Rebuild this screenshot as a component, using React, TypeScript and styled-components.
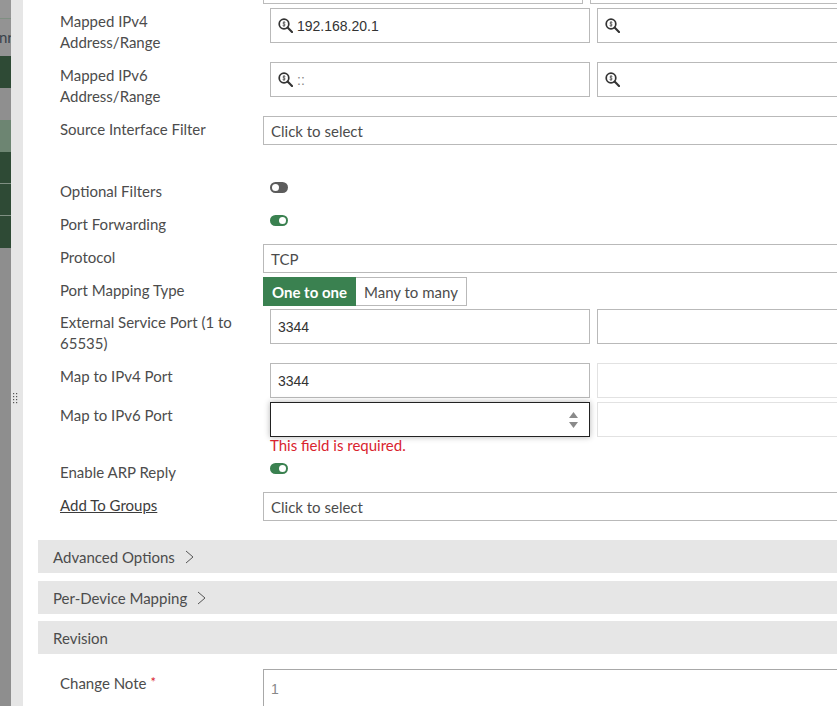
import React from "react";
import styled, { createGlobalStyle } from "styled-components";

const Global = createGlobalStyle`
  html, body { margin: 0; padding: 0; height: 706px; overflow: hidden; background: #fff; }
  #root { height: 706px; }
  * { box-sizing: border-box; }
`;

const Page = styled.div`
  display: flex;
  width: 837px;
  height: 706px;
  overflow: hidden;
  font-family: Lato, "Liberation Sans", sans-serif;
  font-size: 15px;
  color: #4c4c4c;
`;

const Backdrop = styled.div`
  width: 11px;
  flex: none;
  display: flex;
  flex-direction: column;
  background: #8e8e8e;
  overflow: hidden;
`;

const BackdropRow = styled.div<{ $h: number; $bg: string; $line?: boolean }>`
  height: ${(p) => p.$h}px;
  flex: none;
  background: ${(p) => p.$bg};
  border-bottom: ${(p) => (p.$line ? "1px solid #7f8f82" : "none")};
  font-size: 15px;
  line-height: ${(p) => p.$h}px;
  color: #38424b;
  white-space: nowrap;
`;

const ClippedText = styled.span`
  display: block;
  margin-left: -1px;
  line-height: 36px;
`;

const Handle = styled.div`
  width: 12px;
  flex: none;
  background: #e6e6e6;
  padding: 389px 0 0 2px;
`;

const Panel = styled.div`
  flex: 1;
  min-width: 0;
  padding-left: 15px;
  overflow: hidden;
  background: #fff;
`;

const TopStub = styled.div`
  display: grid;
  grid-template-columns: 320px 320px;
  column-gap: 7px;
  height: 4px;
  padding-left: 225px;
`;

const StubCell = styled.div`
  border: 1px solid #bbb;
  border-top: none;
`;

const Row = styled.div<{ $top: number; $wide?: boolean }>`
  display: grid;
  grid-template-columns: ${(p) => (p.$wide ? "203px 700px" : "203px 320px 320px")};
  column-gap: ${(p) => (p.$wide ? "0" : "7px")};
  align-items: start;
  margin-top: ${(p) => p.$top}px;
  padding-left: 22px;
  ${(p) => (p.$wide ? "width: 925px;" : "")}
`;

const Label = styled.div<{ $flush?: boolean }>`
  line-height: 21px;
  padding-top: ${(p) => (p.$flush ? 0 : 3)}px;
  color: #4c4c4c;
`;

const LinkLabel = styled.a`
  color: #3c3c3c;
  text-decoration: underline;
`;

const Required = styled.span`
  color: #d9232e;
  font-size: 13px;
  vertical-align: 2px;
  margin-left: 4px;
`;

const Field = styled.div<{ $tall?: boolean; $tone?: "normal" | "muted" | "focus" }>`
  height: ${(p) => (p.$tall ? 35 : 29)}px;
  display: flex;
  align-items: center;
  gap: 4px;
  padding: 0 7px;
  background: #fff;
  border: ${(p) =>
    p.$tone === "focus"
      ? "1.5px solid #222"
      : p.$tone === "muted"
        ? "1px solid #e2e2e2"
        : "1px solid #b9b9b9"};
  box-shadow: ${(p) => (p.$tone === "focus" ? "0 0 6px rgba(0,0,0,.3)" : "none")};
  color: #4c4c4c;
`;

const Numeric = styled.span<{ $dim?: boolean }>`
  font-family: "Liberation Sans", Arial, sans-serif;
  font-size: 14px;
  color: ${(p) => (p.$dim ? "#888" : "#333")};
`;

const SpinBox = styled.span`
  margin-left: auto;
  margin-right: 4px;
  display: flex;
`;

const ErrorText = styled.div`
  color: #d9232e;
  line-height: 15px;
  margin-top: 1px;
`;

const FieldStack = styled.div`
  display: flex;
  flex-direction: column;
`;

const Toggle = styled.span<{ $on?: boolean }>`
  display: flex;
  align-items: center;
  justify-content: ${(p) => (p.$on ? "flex-end" : "flex-start")};
  width: 18px;
  height: 11px;
  margin-top: 1px;
  padding: 0 2px;
  border-radius: 6px;
  background: ${(p) => (p.$on ? "#3a8150" : "#5c5c5c")};
  &::after {
    content: "";
    width: 7px;
    height: 7px;
    border-radius: 50%;
    background: #fff;
  }
`;

const Segmented = styled.div`
  display: flex;
  height: 29px;
`;

const Segment = styled.div<{ $active?: boolean }>`
  display: flex;
  align-items: center;
  padding: 0 8px;
  background: ${(p) => (p.$active ? "#3a8150" : "#fff")};
  color: ${(p) => (p.$active ? "#fff" : "#4c4c4c")};
  font-weight: ${(p) => (p.$active ? 700 : 400)};
  border: 1px solid ${(p) => (p.$active ? "#3a8150" : "#b9b9b9")};
  border-left: ${(p) => (p.$active ? "1px solid #3a8150" : "none")};
  white-space: nowrap;
`;

const Section = styled.div<{ $top: number }>`
  display: flex;
  align-items: center;
  gap: 10px;
  height: 33px;
  margin-top: ${(p) => p.$top}px;
  padding-left: 15px;
  background: #e6e6e6;
  color: #4c4c4c;
`;

const NoteBox = styled.div`
  height: 60px;
  padding: 9px 7px;
  border: 1px solid #a8a8a8;
  border-bottom: none;
`;

const Dots = () => (
  <svg width="5" height="11" viewBox="0 0 5 11" fill="#555">
    {[0, 3, 6, 9].map((y) => (
      <React.Fragment key={y}>
        <rect x="0" y={y} width="1.2" height="1.2" />
        <rect x="3" y={y} width="1.2" height="1.2" />
      </React.Fragment>
    ))}
  </svg>
);

const MoneySearch = () => (
  <svg width="15" height="15" viewBox="0 0 15 15" fill="none" style={{ flex: "none" }}>
    <circle cx="6" cy="6" r="4.8" stroke="#333" strokeWidth="1.7" />
    <path d="M9.6 9.6 14 14" stroke="#333" strokeWidth="2.1" strokeLinecap="round" />
    <path
      d="M7.4 4.6C7 4 5 3.9 4.9 5c0 1.2 2.4.8 2.3 2 -.1 1.1-2.1 1-2.6.4M6 3.2v5.6"
      stroke="#444"
      strokeWidth=".8"
    />
  </svg>
);

const Spinner = () => (
  <svg width="9" height="16" viewBox="0 0 9 16" fill="#8a8a8a">
    <path d="M4.5 0 9 6H0Z" />
    <path d="M0 10h9l-4.5 6Z" />
  </svg>
);

const Chevron = () => (
  <svg width="9" height="14" viewBox="0 0 9 14" fill="none" style={{ flex: "none" }}>
    <path d="M1 1l7 6-7 6" stroke="#555" strokeWidth="1" />
  </svg>
);

export default function App() {
  return (
    <Page>
      <Global />
      <Backdrop>
        <BackdropRow $h={19} $bg="#969696" $line />
        <BackdropRow $h={37} $bg="#939393">
          <ClippedText>nr</ClippedText>
        </BackdropRow>
        <BackdropRow $h={32} $bg="#2e4a35" />
        <BackdropRow $h={32} $bg="#8f8f8f" />
        <BackdropRow $h={32} $bg="#6d8572" />
        <BackdropRow $h={32} $bg="#2e4a35" $line />
        <BackdropRow $h={32} $bg="#2e4a35" $line />
        <BackdropRow $h={32} $bg="#2e4a35" />
      </Backdrop>
      <Handle>
        <Dots />
      </Handle>
      <Panel>
        <TopStub>
          <StubCell />
          <StubCell />
        </TopStub>

        <Row $top={4}>
          <Label>
            Mapped IPv4
            <br />
            Address/Range
          </Label>
          <Field $tall>
            <MoneySearch />
            <Numeric>192.168.20.1</Numeric>
          </Field>
          <Field $tall>
            <MoneySearch />
          </Field>
        </Row>

        <Row $top={9}>
          <Label>
            Mapped IPv6
            <br />
            Address/Range
          </Label>
          <Field $tall>
            <MoneySearch />
            <Numeric $dim>::</Numeric>
          </Field>
          <Field $tall>
            <MoneySearch />
          </Field>
        </Row>

        <Row $top={9} $wide>
          <Label>Source Interface Filter</Label>
          <Field>Click to select</Field>
        </Row>

        <Row $top={36}>
          <Label $flush>Optional Filters</Label>
          <Toggle />
        </Row>

        <Row $top={12}>
          <Label $flush>Port Forwarding</Label>
          <Toggle $on />
        </Row>

        <Row $top={9} $wide>
          <Label>Protocol</Label>
          <Field>TCP</Field>
        </Row>

        <Row $top={4} $wide>
          <Label>Port Mapping Type</Label>
          <Segmented>
            <Segment $active>One to one</Segment>
            <Segment>Many to many</Segment>
          </Segmented>
        </Row>

        <Row $top={3}>
          <Label>External Service Port (1 to 65535)</Label>
          <Field $tall>
            <Numeric>3344</Numeric>
          </Field>
          <Field $tall />
        </Row>

        <Row $top={9}>
          <Label>Map to IPv4 Port</Label>
          <Field $tall>
            <Numeric>3344</Numeric>
          </Field>
          <Field $tall $tone="muted" />
        </Row>

        <Row $top={4}>
          <Label>Map to IPv6 Port</Label>
          <FieldStack>
            <Field $tall $tone="focus">
              <SpinBox>
                <Spinner />
              </SpinBox>
            </Field>
            <ErrorText>This field is required.</ErrorText>
          </FieldStack>
          <Field $tall $tone="muted" />
        </Row>

        <Row $top={9}>
          <Label $flush>Enable ARP Reply</Label>
          <Toggle $on />
        </Row>

        <Row $top={9} $wide>
          <Label>
            <LinkLabel>Add To Groups</LinkLabel>
          </Label>
          <Field>Click to select</Field>
        </Row>

        <Section $top={19}>
          Advanced Options
          <Chevron />
        </Section>
        <Section $top={8}>
          Per-Device Mapping
          <Chevron />
        </Section>
        <Section $top={7}>Revision</Section>

        <Row $top={15} $wide>
          <Label>
            Change Note<Required>*</Required>
          </Label>
          <NoteBox>
            <Numeric $dim>1</Numeric>
          </NoteBox>
        </Row>
      </Panel>
    </Page>
  );
}
